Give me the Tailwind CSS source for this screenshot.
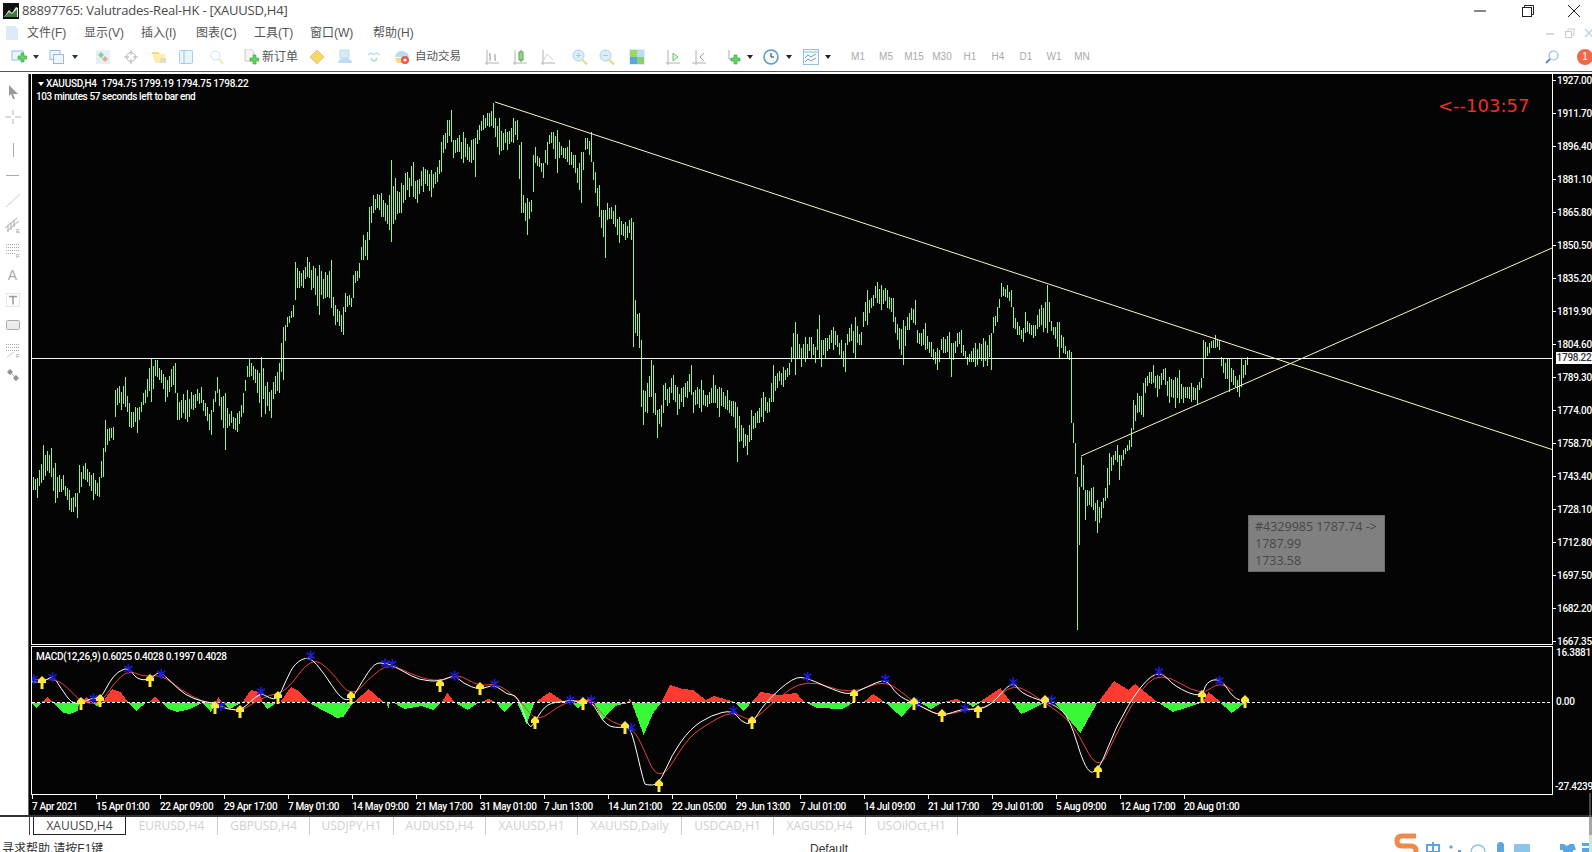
<!DOCTYPE html>
<html lang="zh">
<head>
  <meta charset="UTF-8">
  <title>XAUUSD,H4</title>
  <script src="https://cdn.jsdelivr.net/npm/@tailwindcss/browser@4"></script>
</head>
<body class="relative flex h-[852px] w-[1592px] flex-col overflow-hidden bg-white font-['Liberation_Sans','Noto_Sans_CJK_SC',sans-serif]">

<!-- Title bar -->
<div class="flex h-[22px] items-center">
  <svg class="ml-[3px] h-[16px] w-[16px]" viewBox="0 0 16 16"><rect width="16" height="16" fill="#111"/><path d="M1 14 6 7l3 3 4-6 2 1v9z" fill="#dff0d8"/><path d="M1 14 6 9l3 2 5-5v8z" fill="#3c7a3c"/></svg>
  <span class="ml-[3px] font-['Open_Sans',sans-serif] text-[13px] tracking-[-0.2px] text-[#4a4a4a]">88897765: Valutrades-Real-HK - [XAUUSD,H4]</span>
  <svg class="ml-auto mr-[36px] h-[12px] w-[12px]" viewBox="0 0 12 12"><path d="M0 6h12" stroke="#111" stroke-width="1"/></svg>
  <svg class="mr-[34px] h-[12px] w-[12px]" viewBox="0 0 12 12" fill="none" stroke="#222"><rect x=".5" y="2.5" width="9" height="9"/><path d="M2.5 2.5v-2h9v9h-2"/></svg>
  <svg class="mr-[12px] h-[12px] w-[12px]" viewBox="0 0 12 12" stroke="#222"><path d="M0 0 12 12M12 0 0 12"/></svg>
</div>

<!-- Menu -->
<div class="flex h-[22px] items-center text-[12px] text-[#555]">
  <svg class="ml-[4px] mr-[7px] h-[16px] w-[16px]" viewBox="0 0 16 16"><path d="M2 1h9l3 3v11H2z" fill="#dcebf7"/></svg>
  <span class="w-[57px]">文件(F)</span>
  <span class="w-[57px]">显示(V)</span>
  <span class="w-[55px]">插入(I)</span>
  <span class="w-[58px]">图表(C)</span>
  <span class="w-[56px]">工具(T)</span>
  <span class="w-[63px]">窗口(W)</span>
  <span>帮助(H)</span>
  <svg class="ml-auto mr-[10px] h-[10px] w-[10px]" viewBox="0 0 10 10"><path d="M1 6h8" stroke="#ccc" stroke-width="1.5"/></svg>
  <svg class="mr-[9px] h-[10px] w-[10px]" viewBox="0 0 10 10" fill="none" stroke="#ccc"><rect x=".5" y="3.5" width="6" height="6"/><path d="M3 3V1h6v6H7"/></svg>
  <svg class="-mr-[2px] h-[10px] w-[10px]" viewBox="0 0 10 10" stroke="#c4d4e0" stroke-width="1.5"><path d="M1 1l8 8M9 1 1 9"/></svg>
</div>

<!-- Toolbar -->
<div class="flex h-[28px] items-center border-b border-[#555] pb-[2px] pl-[11px] text-[12px] text-[#555]">
  <svg class="h-[16px] w-[16px]" viewBox="0 0 16 16"><rect x="1" y="2" width="11" height="9" fill="#eef6fc" stroke="#8fc0e4"/><path d="M7 7h3V4h3v3h3v3h-3v3h-3v-3H7z" fill="#5fd55f" stroke="#3a9a3a" stroke-width=".6"/></svg>
  <span class="ml-[6px] h-0 w-0 border-x-[3px] border-t-[4px] border-x-transparent border-t-[#333]"></span>
  <svg class="ml-[10px] h-[16px] w-[16px]" viewBox="0 0 16 16" fill="#eef6fc" stroke="#8fc0e4"><rect x="1" y="1.5" width="10" height="9"/><rect x="4.5" y="5.5" width="10" height="9"/></svg>
  <span class="ml-[7px] h-0 w-0 border-x-[3px] border-t-[4px] border-x-transparent border-t-[#333]"></span>
  <svg class="ml-[17px] h-[16px] w-[16px]" viewBox="0 0 16 16"><rect x="1" y="1" width="14" height="14" fill="#e3f0f8"/><path d="M6 3 9 6 6 9 3 6z" fill="#8ccf8c"/><path d="M10 7l3 3-3 3-3-3z" fill="#eba98a"/></svg>
  <svg class="ml-[12px] h-[16px] w-[16px]" viewBox="0 0 16 16" fill="none" stroke="#b4b4b4"><circle cx="8" cy="8" r="4.5"/><path d="M8 1v5M8 10v5M1 8h5M10 8h5"/></svg>
  <svg class="ml-[12px] h-[16px] w-[16px]" viewBox="0 0 16 16"><path d="M1 3h6l2 2h5v9H4z" fill="#fbeeb0"/><path d="M1 3h6l2 2H1z" fill="#f6dc80"/><path d="M9 9h6v5H9z" fill="#e6dcc0"/></svg>
  <svg class="ml-[11px] h-[16px] w-[16px]" viewBox="0 0 16 16"><rect x="1.5" y="1.5" width="13" height="13" rx="1" fill="#eaf4fb" stroke="#a6cde8"/><path d="M6 2v12" stroke="#9cc0da"/></svg>
  <svg class="ml-[15px] h-[16px] w-[16px]" viewBox="0 0 16 16" fill="none"><circle cx="6.5" cy="6.5" r="4.5" stroke="#d0dfe8"/><path d="M10 10l4 5" stroke="#f4e6a0" stroke-width="2"/></svg>
  <svg class="ml-[18px] h-[16px] w-[16px]" viewBox="0 0 16 16"><path d="M2 0h6l3 3v9H2z" fill="#f4f4f4" stroke="#bbb" stroke-width=".8"/><path d="M7 9h3V6h3v3h3v3h-3v3h-3v-3H7z" fill="#5fd55f" stroke="#3a9a3a" stroke-width=".6"/></svg>
  <span class="ml-[3px] w-[35px] whitespace-nowrap">新订单</span>
  <svg class="ml-[12px] h-[16px] w-[16px]" viewBox="0 0 16 16"><path d="M8 1l7 7-7 7-7-7z" fill="#f8d860" stroke="#c8b490" stroke-width=".7"/></svg>
  <svg class="ml-[12px] h-[16px] w-[16px]" viewBox="0 0 16 16"><path d="M3 1h9v8H3z" fill="#d8ecf8" stroke="#aad0ea" stroke-width=".7"/><path d="M1 14c0-3 3-5 7-5s7 2 7 5z" fill="#bedcf2"/></svg>
  <svg class="ml-[13px] h-[16px] w-[16px]" viewBox="0 0 16 16" fill="none" stroke-width="1.4"><path d="M2 6c3-3 5-2 6 0" stroke="#bcdcf0"/><path d="M14 6c-3-3-5-2-6 0" stroke="#bcdcf0"/><path d="M5 9c1 4 5 4 6 0" stroke="#a8e0c0"/></svg>
  <svg class="ml-[12px] h-[16px] w-[16px]" viewBox="0 0 16 16"><path d="M1 9c0-5 4-8 8-7s6 3 6 6H1z" fill="#bcdcf2"/><path d="M1 9h9v5H3z" fill="#f4dc80"/><circle cx="11" cy="11" r="4" fill="#e05a4a"/><circle cx="11" cy="11" r="1.6" fill="#fff"/></svg>
  <span class="ml-[5px] w-[46px] whitespace-nowrap text-[11.5px]">自动交易</span>
  <svg class="ml-[23px] h-[16px] w-[16px]" viewBox="0 0 16 16" fill="none" stroke="#b0b6a8"><path d="M1 14h14M3 1v15"/><path d="M6 4v8M5 6h1M6 10h1M11 5v7M10 7h1M11 10h1" stroke="#9aa090"/></svg>
  <svg class="ml-[12px] h-[16px] w-[16px]" viewBox="0 0 16 16" fill="none" stroke="#b0b6a8"><path d="M1 14h14M3 1v15"/><rect x="7" y="3" width="4" height="8" fill="#80e080" stroke="#5fa05f"/><path d="M9 1v2M9 11v2" stroke="#777"/></svg>
  <svg class="ml-[12px] h-[16px] w-[16px]" viewBox="0 0 16 16" fill="none" stroke="#b0b6a8"><path d="M1 14h14M3 1v15"/><path d="M4 11l3-6 6 6" stroke="#c8d8c8"/></svg>
  <svg class="ml-[16px] h-[16px] w-[16px]" viewBox="0 0 16 16" fill="none"><circle cx="6.5" cy="6.5" r="5.5" fill="#dceef8" stroke="#a6d0ea"/><path d="M4 6.5h5M6.5 4v5" stroke="#9ecde8"/><path d="M10 10.5l5 5" stroke="#ecd878" stroke-width="2"/></svg>
  <svg class="ml-[11px] h-[16px] w-[16px]" viewBox="0 0 16 16" fill="none"><circle cx="6.5" cy="6.5" r="5.5" fill="#dceef8" stroke="#a6d0ea"/><path d="M4 6.5h5" stroke="#9ecde8"/><path d="M10 10.5l5 5" stroke="#ecd878" stroke-width="2"/></svg>
  <svg class="ml-[14px] h-[16px] w-[16px]" viewBox="0 0 16 16"><rect width="16" height="16" fill="#dceef8"/><rect x="1" y="1" width="7" height="7" fill="#9cd860"/><rect x="8" y="1" width="7" height="7" fill="#b8dcf4"/><rect x="1" y="8" width="7" height="7" fill="#5aa6de"/><rect x="8" y="8" width="7" height="7" fill="#8ad070"/></svg>
  <svg class="ml-[20px] h-[16px] w-[16px]" viewBox="0 0 16 16" fill="none" stroke="#b0b6a8"><path d="M1 14h14M3 1v15"/><path d="M8 4l5 4-5 4z" stroke="#70c070" fill="#e0f4e0"/></svg>
  <svg class="ml-[10px] h-[16px] w-[16px]" viewBox="0 0 16 16" fill="none" stroke="#b0b6a8"><path d="M1 14h14M5 1v15"/><path d="M13 4 9 8l4 4" stroke="#9aa090"/></svg>
  <svg class="ml-[19px] h-[16px] w-[16px]" viewBox="0 0 16 16"><path d="M3 1v9h8" fill="none" stroke="#aaa"/><path d="M5 9h3V6h3v3h3v3h-3v3H8v-3H5z" fill="#5fd55f" stroke="#3a9a3a" stroke-width=".6"/></svg>
  <span class="ml-[5px] h-0 w-0 border-x-[3px] border-t-[4px] border-x-transparent border-t-[#222]"></span>
  <svg class="ml-[10px] h-[16px] w-[16px]" viewBox="0 0 16 16" fill="#f4fafe"><circle cx="8" cy="8" r="7" stroke="#5a9cc8" stroke-width="1.6"/><path d="M8 4v4h3" fill="none" stroke="#333"/></svg>
  <span class="ml-[7px] h-0 w-0 border-x-[3px] border-t-[4px] border-x-transparent border-t-[#222]"></span>
  <svg class="ml-[11px] h-[16px] w-[16px]" viewBox="0 0 16 16" fill="#f2f8fc"><rect x=".5" y=".5" width="15" height="15" stroke="#92c0da"/><path d="M0 3h16" stroke="#92c0da"/><path d="M2 9l3-3 3 2 5-3M2 13l3-3 3 2 5-3" fill="none" stroke="#8c9c8c"/></svg>
  <span class="ml-[6px] h-0 w-0 border-x-[3px] border-t-[4px] border-x-transparent border-t-[#222]"></span>
  <div class="ml-[13px] flex text-center text-[10px] text-[#aaa]">
    <span class="w-[28px]">M1</span>
    <span class="w-[28px]">M5</span>
    <span class="w-[28px]">M15</span>
    <span class="w-[28px]">M30</span>
    <span class="w-[28px]">H1</span>
    <span class="w-[28px]">H4</span>
    <span class="w-[28px]">D1</span>
    <span class="w-[28px]">W1</span>
    <span class="w-[28px]">MN</span>
  </div>
  <svg class="ml-auto h-[14px] w-[14px]" viewBox="0 0 14 14" fill="none"><circle cx="8.5" cy="5.5" r="4.5" stroke="#8cb8d8" stroke-width="1.2"/><path d="M5 9l-4 4" stroke="#5c8cb0" stroke-width="1.8"/></svg>
  <span class="ml-[18px] mr-[-1px] flex h-[16px] w-[16px] items-center justify-center rounded-full bg-[#f06a4a] text-[10px] text-white">1</span>
</div>
<div class="h-[2px]"></div>

<!-- Workspace -->
<div class="flex h-[741px]">
  <!-- Drawing tools -->
  <div class="flex w-[28px] flex-col items-center pr-[3px] pt-[5px]">
    <div class="flex h-[25px] items-center"><svg class="h-[16px] w-[16px]" viewBox="0 0 16 16"><path d="M4 1l9 9H8l2 5-2 0-2-5-2 2z" fill="#9a9a9a"/></svg></div>
    <div class="flex h-[25px] items-center"><svg class="h-[16px] w-[16px]" viewBox="0 0 16 16" stroke="#b4b4b4"><path d="M8 1v5M8 10v5M0 8h6M10 8h6"/></svg></div>
    <div class="mt-[8px] flex h-[25px] items-center"><svg class="h-[16px] w-[16px]" viewBox="0 0 16 16" stroke="#aaa"><path d="M8.500 1v14"/></svg></div>
    <div class="flex h-[25px] items-center"><svg class="h-[16px] w-[16px]" viewBox="0 0 16 16" stroke="#aaa"><path d="M1 8.500h13"/></svg></div>
    <div class="flex h-[25px] items-center"><svg class="h-[16px] w-[16px]" viewBox="0 0 16 16" stroke="#ccc"><path d="M1 15 15 2"/></svg></div>
    <div class="flex h-[25px] items-center"><svg class="h-[16px] w-[16px]" viewBox="0 0 16 16" stroke="#aaa" fill="none"><path d="M2 14 14 4M0 11 12 1M3 8v7M6 6v7M9 3v7"/><text x="11" y="16" class="text-[6px]" fill="#999" stroke="none">E</text></svg></div>
    <div class="flex h-[25px] items-center"><svg class="h-[16px] w-[16px]" viewBox="0 0 16 16" stroke="#aaa" stroke-dasharray="1 1"><path d="M1 2.500h13M1 5.500h13M1 8.500h13M1 11.500h10"/><text x="11" y="16" class="text-[6px]" fill="#999" stroke="none" stroke-dasharray="0">F</text></svg></div>
    <div class="flex h-[25px] items-center text-[14px] leading-none text-[#aaa]">A</div>
    <div class="flex h-[25px] items-center"><svg class="h-[16px] w-[16px]" viewBox="0 0 16 16" fill="none" stroke="#ccc" stroke-dasharray="1 1"><rect x="1.500" y="1.500" width="13" height="13"/><path d="M4 4.500h8M8 4.500v8" stroke="#999" stroke-width="1.5" stroke-dasharray="0"/></svg></div>
    <div class="flex h-[25px] items-center"><svg class="h-[16px] w-[16px]" viewBox="0 0 16 16"><rect x="1.500" y="3.500" width="13" height="9" rx="1" fill="#ececec" stroke="#aaa"/></svg></div>
    <div class="flex h-[25px] items-center"><svg class="h-[16px] w-[16px]" viewBox="0 0 16 16" stroke="#aaa" stroke-dasharray="1 1"><path d="M1 2.500h13M1 5.500h13M1 8.500h13"/><path d="M2 15l7-5" stroke="#ccc" stroke-dasharray="0"/><text x="11" y="16" class="text-[6px]" fill="#999" stroke="none" stroke-dasharray="0">F</text></svg></div>
    <div class="flex h-[25px] items-center"><svg class="h-[16px] w-[16px]" viewBox="0 0 16 16"><path d="M2 5l3-3 3 3-3 3zM8 11l3-3 3 3-3 3z" fill="#8a8a8a"/><path d="M4 4l8 8" stroke="#aaa"/></svg></div>
  </div>

  <!-- Chart window -->
  <div class="flex w-[1564px] flex-col border-l border-[#666] bg-[#040404] pl-[2px] text-[10px] text-white">

    <!-- Price pane -->
    <div class="flex h-[571px]">
      <div class="relative h-[571px] w-[1522px] border-x border-b border-white">
        <svg class="block" width="1520" height="570" viewBox="32 74 1520 570">
          <path id="bars" fill="none" stroke="#86f886" stroke-width="1" shape-rendering="crispEdges"/>
          <path d="M32 358.500H1552" stroke="#eef8ee" stroke-width="1" shape-rendering="crispEdges"/>
          <path d="M495 102 1552 449.500M1081 456 1552 248" fill="none" stroke="#fdf6c0" stroke-width="1"/>
        </svg>
        <div class="absolute left-[6px] top-[3px] flex items-center font-['Roboto',sans-serif] font-medium leading-[13px] tracking-[-0.25px]">
          <span class="h-0 w-0 border-x-[3px] border-t-[4px] border-x-transparent border-t-white"></span>
          <span class="ml-[2px] whitespace-pre">XAUUSD,H4  1794.75 1799.19 1794.75 1798.22</span>
        </div>
        <div class="absolute left-[4px] top-[16px] font-['Roboto',sans-serif] font-medium leading-[13px] tracking-[-0.4px]">103 minutes 57 seconds left to bar end</div>
        <div class="absolute left-[1406px] top-[21px] font-['DejaVu_Sans',sans-serif] text-[18px] leading-[22px] text-[#f02c2c]">&lt;--103:57</div>
        <div class="absolute left-[1216px] top-[441px] h-[57px] w-[137px] border border-[#6c6c6c] bg-[#808080] px-[6px] pt-[2px] font-['Open_Sans',sans-serif] text-[12.5px] leading-[17px] text-[#474747]">
          #4329985 1787.74 -&gt;<br>1787.99<br>1733.58
        </div>
      </div>
      <div class="relative flex h-[573px] w-[39px] flex-col justify-between font-['Roboto',sans-serif] font-medium">
        <span class="flex h-[12px] items-center"><i class="mr-[1px] h-px w-[3px] bg-white"></i><span class="tracking-[-0.3px]">1927.00</span></span>
        <span class="flex h-[12px] items-center"><i class="mr-[1px] h-px w-[3px] bg-white"></i><span class="tracking-[-0.3px]">1911.70</span></span>
        <span class="flex h-[12px] items-center"><i class="mr-[1px] h-px w-[3px] bg-white"></i><span class="tracking-[-0.3px]">1896.40</span></span>
        <span class="flex h-[12px] items-center"><i class="mr-[1px] h-px w-[3px] bg-white"></i><span class="tracking-[-0.3px]">1881.10</span></span>
        <span class="flex h-[12px] items-center"><i class="mr-[1px] h-px w-[3px] bg-white"></i><span class="tracking-[-0.3px]">1865.80</span></span>
        <span class="flex h-[12px] items-center"><i class="mr-[1px] h-px w-[3px] bg-white"></i><span class="tracking-[-0.3px]">1850.50</span></span>
        <span class="flex h-[12px] items-center"><i class="mr-[1px] h-px w-[3px] bg-white"></i><span class="tracking-[-0.3px]">1835.20</span></span>
        <span class="flex h-[12px] items-center"><i class="mr-[1px] h-px w-[3px] bg-white"></i><span class="tracking-[-0.3px]">1819.90</span></span>
        <span class="flex h-[12px] items-center"><i class="mr-[1px] h-px w-[3px] bg-white"></i><span class="tracking-[-0.3px]">1804.60</span></span>
        <span class="flex h-[12px] items-center"><i class="mr-[1px] h-px w-[3px] bg-white"></i><span class="tracking-[-0.3px]">1789.30</span></span>
        <span class="flex h-[12px] items-center"><i class="mr-[1px] h-px w-[3px] bg-white"></i><span class="tracking-[-0.3px]">1774.00</span></span>
        <span class="flex h-[12px] items-center"><i class="mr-[1px] h-px w-[3px] bg-white"></i><span class="tracking-[-0.3px]">1758.70</span></span>
        <span class="flex h-[12px] items-center"><i class="mr-[1px] h-px w-[3px] bg-white"></i><span class="tracking-[-0.3px]">1743.40</span></span>
        <span class="flex h-[12px] items-center"><i class="mr-[1px] h-px w-[3px] bg-white"></i><span class="tracking-[-0.3px]">1728.10</span></span>
        <span class="flex h-[12px] items-center"><i class="mr-[1px] h-px w-[3px] bg-white"></i><span class="tracking-[-0.3px]">1712.80</span></span>
        <span class="flex h-[12px] items-center"><i class="mr-[1px] h-px w-[3px] bg-white"></i><span class="tracking-[-0.3px]">1697.50</span></span>
        <span class="flex h-[12px] items-center"><i class="mr-[1px] h-px w-[3px] bg-white"></i><span class="tracking-[-0.3px]">1682.20</span></span>
        <span class="flex h-[12px] items-center"><i class="mr-[1px] h-px w-[3px] bg-white"></i><span class="tracking-[-0.3px]">1667.35</span></span>
        <span class="absolute left-[3px] top-[278px] h-[12px] w-[36px] bg-white text-center leading-[12px] tracking-[-0.3px] text-[#333]">1798.22</span>
      </div>
    </div>

    <!-- MACD pane -->
    <div class="mt-px flex h-[149px]">
      <div class="relative h-[149px] w-[1522px] border border-white">
        <svg class="block" width="1520" height="147" viewBox="32 647 1520 147">
          <path id="histUp" fill="none" stroke="#ff3a30" shape-rendering="crispEdges"/>
          <path id="histDown" fill="none" stroke="#38f838" shape-rendering="crispEdges"/>
          <path d="M32 702.500H1552" stroke="#fff" stroke-dasharray="3 2" shape-rendering="crispEdges"/>
          <path id="signal" fill="none" stroke="#e8403a"/>
          <path id="macd" fill="none" stroke="#fff"/>
          <path id="stars" fill="none" stroke="#1c1ce0" stroke-width="1.6"/>
          <path id="arrows" fill="#ffe83c"/>
        </svg>
        <div class="absolute left-[4px] top-[3px] font-['Roboto',sans-serif] font-medium leading-[13px] tracking-[-0.3px]">MACD(12,26,9) 0.6025 0.4028 0.1997 0.4028</div>
      </div>
      <div class="relative w-[39px] font-['Roboto',sans-serif] font-medium tracking-[-0.3px]">
        <span class="absolute left-[3px] top-[1px] leading-[12px]">16.3881</span>
        <span class="absolute left-[3px] top-[50px] leading-[12px]">0.00</span>
        <span class="absolute left-[2px] top-[135px] leading-[12px]">-27.4239</span>
      </div>
    </div>

    <!-- Time axis -->
    <div class="flex h-[4px] pl-px">
      <i class="h-[4px] w-[64px] border-l border-white"></i>
      <i class="h-[4px] w-[64px] border-l border-white"></i>
      <i class="h-[4px] w-[64px] border-l border-white"></i>
      <i class="h-[4px] w-[64px] border-l border-white"></i>
      <i class="h-[4px] w-[64px] border-l border-white"></i>
      <i class="h-[4px] w-[64px] border-l border-white"></i>
      <i class="h-[4px] w-[64px] border-l border-white"></i>
      <i class="h-[4px] w-[64px] border-l border-white"></i>
      <i class="h-[4px] w-[64px] border-l border-white"></i>
      <i class="h-[4px] w-[64px] border-l border-white"></i>
      <i class="h-[4px] w-[64px] border-l border-white"></i>
      <i class="h-[4px] w-[64px] border-l border-white"></i>
      <i class="h-[4px] w-[64px] border-l border-white"></i>
      <i class="h-[4px] w-[64px] border-l border-white"></i>
      <i class="h-[4px] w-[64px] border-l border-white"></i>
      <i class="h-[4px] w-[64px] border-l border-white"></i>
      <i class="h-[4px] w-[64px] border-l border-white"></i>
      <i class="h-[4px] w-[64px] border-l border-white"></i>
      <i class="h-[4px] w-[64px] border-l border-white"></i>
    </div>
    <div class="flex h-[16px] pl-px font-['Roboto',sans-serif] font-medium leading-[16px] tracking-[-0.35px]">
      <span class="w-[64px]">7 Apr 2021</span>
      <span class="w-[64px]">15 Apr 01:00</span>
      <span class="w-[64px]">22 Apr 09:00</span>
      <span class="w-[64px]">29 Apr 17:00</span>
      <span class="w-[64px]">7 May 01:00</span>
      <span class="w-[64px]">14 May 09:00</span>
      <span class="w-[64px]">21 May 17:00</span>
      <span class="w-[64px]">31 May 01:00</span>
      <span class="w-[64px]">7 Jun 13:00</span>
      <span class="w-[64px]">14 Jun 21:00</span>
      <span class="w-[64px]">22 Jun 05:00</span>
      <span class="w-[64px]">29 Jun 13:00</span>
      <span class="w-[64px]">7 Jul 01:00</span>
      <span class="w-[64px]">14 Jul 09:00</span>
      <span class="w-[64px]">21 Jul 17:00</span>
      <span class="w-[64px]">29 Jul 01:00</span>
      <span class="w-[64px]">5 Aug 09:00</span>
      <span class="w-[64px]">12 Aug 17:00</span>
      <span class="w-[64px]">20 Aug 01:00</span>
    </div>
  </div>
</div>

<!-- Chart tabs -->
<div class="flex h-[21px] items-start border-t-2 border-t-[#333] border-b-0 font-['Open_Sans',sans-serif] text-[12px] text-[#cfcfcf]">
  <span class="ml-[29px] h-[18px] w-px bg-[#444]"></span>
  <span class="ml-[3px] flex h-[18px] w-[93px] items-center justify-center border-x border-b border-[#222] text-[#444]">XAUUSD,H4</span>
  <span class="flex h-[18px] w-[92px] items-center justify-center border-r border-[#ccc]">EURUSD,H4</span>
  <span class="flex h-[18px] w-[92px] items-center justify-center border-r border-[#ccc]">GBPUSD,H4</span>
  <span class="flex h-[18px] w-[84px] items-center justify-center border-r border-[#ccc]">USDJPY,H1</span>
  <span class="flex h-[18px] w-[92px] items-center justify-center border-r border-[#ccc]">AUDUSD,H4</span>
  <span class="flex h-[18px] w-[92px] items-center justify-center border-r border-[#ccc]">XAUUSD,H1</span>
  <span class="flex h-[18px] w-[104px] items-center justify-center border-r border-[#ccc]">XAUUSD,Daily</span>
  <span class="flex h-[18px] w-[92px] items-center justify-center border-r border-[#ccc]">USDCAD,H1</span>
  <span class="flex h-[18px] w-[92px] items-center justify-center border-r border-[#ccc]">XAGUSD,H4</span>
  <span class="flex h-[18px] w-[92px] items-center justify-center border-r border-[#ccc]">USOilOct,H1</span>
</div>

<!-- Status bar, cut by the bottom edge of the window -->
<div class="flex h-[16px] pt-[5px] text-[12px] leading-[16px] text-[#333]">
  <span class="ml-[2px] w-[808px]">寻求帮助,请按F1键</span>
  <span>Default</span>
</div>

<!-- IME toolbar floating over the status bar -->
<svg class="absolute bottom-0 right-0 h-[60px] w-[200px]" viewBox="1392 792 200 60">
  <path d="M1416 836h-14q-5 0-5 5t5 5h9q5 0 5 5t-5 5h-14" fill="none" stroke="#ef8a4a" stroke-width="5"/>
  <g fill="#5aa6e0">
    <path d="M1427 845h12v7h-12z" fill="none" stroke="#5aa6e0" stroke-width="2"/>
    <path d="M1433 842v10" stroke="#5aa6e0" stroke-width="2"/>
    <path d="M1451 845l2 2-2 2-2-2zM1458 850h3v2h-3z"/>
    <circle cx="1478" cy="852" r="7" fill="none" stroke="#8cc4ec" stroke-width="1.6"/>
    <rect x="1497" y="842" width="7" height="12" rx="3.500"/>
    <rect x="1514" y="844" width="16" height="10" rx="1" fill="#8cc4ec"/>
    <path d="M1560 844h4l3 2 3-2h4l2 6h-3v4h-10v-4h-3z"/>
    <path d="M1582 843h7v3h-7zM1582 848h7v4h-7z"/>
  </g>
  <path d="M1590 793v24" stroke="#888"/>
  <rect x="1589" y="817" width="3" height="18" fill="#a6a6a6"/>
  <rect x="1589" y="835" width="3" height="17" fill="#cfe8cf"/>
</svg>

<script>
(function () {
  // [x, top, bottom] traced from the chart, everything in page pixels
  var env = [[32,477,490],[37,478,498],[43,445,480],[50,448,477],[55,463,503],[63,475,490],[68,490,510],[77,493,518],[79,465,493],[85,463,480],[92,473,500],[98,477,497],[102,448,477],[105,420,452],[112,427,440],[115,390,417],[125,377,407],[128,403,427],[137,408,433],[143,393,405],[151,358,402],[157,360,377],[165,377,402],[174,363,393],[177,393,420],[187,390,422],[200,387,403],[210,410,435],[217,377,393],[224,393,450],[227,408,428],[237,413,432],[243,393,413],[248,358,377],[257,370,393],[260,357,417],[270,390,418],[278,363,393],[282,327,380],[287,317,327],[293,305,317],[295,262,300],[302,270,288],[307,257,277],[318,265,315],[325,272,298],[330,260,308],[335,305,325],[342,307,335],[345,293,312],[352,297,310],[353,275,298],[358,263,278],[362,235,260],[367,232,260],[369,207,240],[373,195,213],[380,193,217],[389,195,230],[391,160,242],[395,178,220],[400,183,213],[405,173,200],[413,162,197],[417,180,203],[422,167,192],[430,170,197],[437,167,182],[441,142,172],[447,120,143],[451,110,142],[453,140,158],[463,132,163],[470,140,163],[474,138,177],[478,125,140],[483,115,130],[492,103,128],[498,118,155],[507,132,150],[513,118,143],[517,120,140],[520,142,213],[523,195,213],[527,198,235],[532,192,207],[533,155,192],[534,147,163],[542,163,178],[546,142,165],[550,132,143],[556,130,173],[562,148,158],[568,140,165],[575,155,173],[578,163,190],[580,152,203],[585,138,150],[591,132,162],[593,162,180],[595,172,193],[598,185,217],[602,210,237],[604,210,258],[607,203,220],[615,205,227],[618,217,243],[625,222,240],[631,218,240],[632,222,347],[635,300,333],[638,313,348],[640,340,407],[642,390,425],[647,383,413],[651,360,397],[652,365,413],[657,410,438],[660,405,427],[663,385,413],[672,375,400],[677,387,415],[683,387,407],[690,365,395],[693,392,413],[700,380,412],[707,395,407],[712,375,403],[719,387,417],[727,390,410],[735,402,428],[737,407,462],[742,428,448],[747,435,455],[750,410,440],[755,413,428],[762,392,422],[768,398,412],[772,365,402],[777,373,388],[782,367,387],[788,363,375],[792,333,358],[795,322,375],[800,348,367],[805,337,362],[810,337,358],[815,347,363],[818,315,358],[821,340,367],[825,338,358],[833,327,350],[840,340,358],[844,343,372],[848,328,342],[854,317,358],[860,332,345],[866,290,325],[868,300,313],[877,282,303],[881,285,310],[887,290,308],[892,298,322],[895,317,333],[902,320,365],[908,313,330],[915,300,325],[917,330,343],[924,323,350],[930,342,357],[937,348,370],[942,337,353],[948,332,358],[951,343,377],[957,333,347],[961,330,353],[967,357,365],[974,343,367],[983,338,367],[990,333,370],[993,317,333],[997,307,322],[1001,283,297],[1007,285,298],[1011,290,307],[1013,307,328],[1017,322,335],[1022,328,342],[1024,312,333],[1033,325,338],[1047,285,333],[1052,327,335],[1057,322,347],[1058,322,358],[1062,337,353],[1068,350,360],[1071,352,423],[1072,423,443],[1076,430,490],[1077,477,630],[1081,457,487],[1083,465,490],[1085,490,520],[1090,488,507],[1092,487,510],[1097,500,533],[1101,502,518],[1103,498,508],[1107,468,498],[1109,453,485],[1113,455,465],[1117,445,462],[1119,455,480],[1123,450,460],[1128,440,450],[1131,428,447],[1133,400,430],[1137,393,413],[1142,383,417],[1144,378,393],[1153,365,383],[1157,375,397],[1164,368,385],[1168,377,403],[1175,377,408],[1178,370,403],[1183,387,403],[1190,383,402],[1196,385,405],[1200,378,388],[1203,340,378],[1208,343,353],[1215,335,348],[1218,340,350],[1222,358,373],[1228,358,392],[1233,370,385],[1238,375,397],[1241,358,387],[1244,360,375],[1247,357,365]];

  // small fixed generator so the bars come out the same every time
  var seed = 7;
  function rnd() { seed = (seed * 16807) % 2147483647; return seed / 2147483647; }

  var bars = {}, i, x;
  for (i = 0; i < env.length - 1; i++) {
    var a = env[i], b = env[i + 1];
    for (x = 33; x <= 1247; x += 2) {
      if (x < a[0] || x >= b[0]) continue;
      var t = (x - a[0]) / (b[0] - a[0]);
      var hi = a[1] + (b[1] - a[1]) * t, lo = a[2] + (b[2] - a[2]) * t;
      var span = lo - hi, off = rnd() * span * 0.35;
      bars[x] = [hi + off, hi + off + span * (0.6 + rnd() * 0.05)];
    }
  }
  // traced points keep their full range, spikes depend on this
  env.forEach(function (p) {
    var bx = Math.round((p[0] - 1) / 2) * 2 + 1;
    bars[bx] = [p[1], p[2]];
  });
  var d = '';
  for (x in bars) d += 'M' + x + '.5 ' + Math.round(bars[x][0]) + 'V' + Math.round(bars[x][1]);
  document.getElementById('bars').setAttribute('d', d);

  // MACD data was read off two crops: first one x/2.376, second 640 + x/2.376, y = 640 + v/3
  function zx1(p) { return [p[0] / 2.376, p[1]]; }
  function zx2(p) { return [640 + p[0] / 2.376, p[1]]; }

  var hist = [[75,0],[85,-5],[98,0],[112,5],[125,0],[150,-10],[165,-11],[183,-8],[187,0],[205,5],[218,0],[230,-3],[243,0],[265,13],[285,10],[303,0],[322,-8],[345,0],[355,0],[367,5],[380,0],[385,0],[400,-6],[420,-9],[450,-6],[480,0],[500,-9],[512,0],[518,5],[525,0],[530,0],[545,-6],[570,0],[575,0],[595,12],[615,10],[622,0],[635,-6],[655,0],[665,0],[690,15],[705,12],[735,0],[760,-6],[800,-15],[815,-14],[835,-1],[840,0],[875,13],[910,0],[918,0],[921,-6],[925,0],[935,0],[960,-6],[1000,-3],[1030,-7],[1045,0],[1048,0],[1062,9],[1078,0],[1082,0],[1110,-7],[1135,0],[1140,0],[1160,3],[1175,0],[1178,0],[1197,-9],[1218,0],[1228,0],[1250,-21],[1268,0],[1272,0],[1305,10],[1340,0],[1360,0],[1372,-5],[1390,0],[1397,5],[1405,0],[1410,0],[1430,-17],[1460,-3],[1490,0],[1495,3],[1500,0],[1528,-32]].map(zx1)
    .concat([[30,-10],[47,-1],[50,0],[70,17],[100,13],[125,12],[155,2],[175,6],[225,0],[245,-8],[262,0],[265,0],[285,10],[330,7],[370,9],[390,0],[395,0],[420,-5],[480,-6],[505,0],[530,0],[553,8],[580,0],[583,0],[620,-14],[650,0],[665,0],[690,-6],[715,0],[720,0],[750,3],[770,0],[775,0],[790,-4],[805,0],[855,14],[880,0],[885,0],[905,-11],[960,0],[985,0],[1045,-30],[1085,0],[1088,0],[1125,21],[1160,12],[1175,18],[1228,0],[1232,0],[1265,-9],[1330,0],[1335,0],[1350,10],[1378,0],[1405,-10],[1435,0]].map(zx2));
  var up = '', down = '';
  for (i = 0; i < hist.length - 1; i++) {
    for (x = Math.ceil(hist[i][0]); x < hist[i + 1][0]; x++) {
      var v = hist[i][1] + (hist[i + 1][1] - hist[i][1]) * (x - hist[i][0]) / (hist[i + 1][0] - hist[i][0]);
      if (v > 0.5) up += 'M' + x + '.5 702V' + Math.round(702 - v);
      if (v < -0.5) down += 'M' + x + '.5 703V' + Math.round(703 - v);
    }
  }
  document.getElementById('histUp').setAttribute('d', up);
  document.getElementById('histDown').setAttribute('d', down);

  // curve through the midpoints so the lines lose their corners
  function line(list) {
    var pts = list.map(function (p) { return [p[0], 640 + p[1] / 3]; });
    var out = 'M' + pts[0][0].toFixed(1) + ' ' + pts[0][1].toFixed(1);
    for (var n = 1; n < pts.length - 1; n++) {
      var mx = (pts[n][0] + pts[n + 1][0]) / 2, my = (pts[n][1] + pts[n + 1][1]) / 2;
      out += 'Q' + pts[n][0].toFixed(1) + ' ' + pts[n][1].toFixed(1) + ' ' + mx.toFixed(1) + ' ' + my.toFixed(1);
    }
    return out;
  }
  var macd = [[75,125],[100,130],[125,105],[145,145],[170,190],[195,190],[215,175],[240,175],[260,125],[280,95],[305,82],[325,118],[355,120],[375,97],[385,100],[410,130],[440,165],[480,185],[515,190],[530,205],[570,212],[595,185],[620,158],[640,175],[660,178],[680,120],[700,70],[735,47],[770,100],[810,178],[835,180],[860,125],[890,68],[915,70],[930,75],[960,95],[995,120],[1045,125],[1080,105],[1100,130],[1140,150],[1175,132],[1205,165],[1230,165],[1258,272],[1272,240],[1300,190],[1340,185],[1360,180],[1385,190],[1405,180],[1440,262],[1485,262],[1500,265],[1530,430]].map(zx1)
    .concat([[15,435],[45,435],[75,345],[120,265],[170,225],[220,210],[240,245],[265,255],[295,190],[365,110],[400,115],[460,150],[500,165],[540,140],[585,115],[610,165],[650,190],[670,200],[715,230],[770,205],[800,210],[835,195],[885,120],[905,160],[960,185],[985,195],[1020,230],[1060,398],[1090,395],[1130,260],[1190,135],[1235,90],[1270,140],[1335,175],[1345,125],[1380,115],[1410,175],[1440,185]].map(zx2));
  var signal = [[75,120],[125,115],[155,135],[195,190],[240,190],[270,130],[305,90],[340,110],[385,105],[430,150],[480,185],[530,200],[570,215],[600,190],[640,165],[680,155],[740,50],[785,90],[835,175],[880,110],[925,70],[990,110],[1045,125],[1085,100],[1140,140],[1180,128],[1240,185],[1275,250],[1340,185],[1405,178],[1440,240],[1500,265]].map(zx1)
    .concat([[0,300],[45,435],[110,300],[150,260],[220,210],[265,250],[320,180],[395,115],[500,165],[585,115],[650,190],[715,230],[770,210],[835,200],[885,125],[960,185],[1030,250],[1088,398],[1125,300],[1180,165],[1235,92],[1335,170],[1378,120],[1440,185]].map(zx2));
  document.getElementById('macd').setAttribute('d', line(macd));
  document.getElementById('signal').setAttribute('d', line(signal));

  var starPts = [[80,118],[125,112],[222,175],[305,87],[383,102],[525,198],[620,155],[738,47],[915,70],[932,72],[1080,107],[1175,132],[1355,180],[1405,180],[1500,263]].map(zx1)
    .concat([[222,212],[398,110],[583,117],[658,188],[772,205],[887,127],[978,180],[1233,95],[1377,122]].map(zx2));
  document.getElementById('stars').setAttribute('d', starPts.map(function (p) {
    var sx = p[0], sy = 640 + p[1] / 3;
    return 'M' + sx + ' ' + (sy - 5) + 'v10M' + (sx - 4) + ' ' + (sy - 3) + 'l8 6M' + (sx + 4) + ' ' + (sy - 3) + 'l-8 6';
  }).join(''));

  var arrowPts = [[100,125],[193,190],[237,180],[357,120],[512,200],[570,213],[660,170],[835,172],[1045,135],[1140,145],[1272,245],[1385,190],[1485,262],[1565,435]].map(zx1)
    .concat([[508,165],[265,245],[652,190],[717,225],[802,212],[963,183],[1088,393],[1335,168],[1438,183]].map(zx2));
  document.getElementById('arrows').setAttribute('d', arrowPts.map(function (p) {
    var ax = Math.round(p[0]), ay = Math.round(640 + p[1] / 3);
    return 'M' + ax + ' ' + (ay - 6) + 'l4 4v3h-2.500v6h-3v-6h-2.500v-3z';
  }).join(''));
})();
</script>
</body>
</html>
